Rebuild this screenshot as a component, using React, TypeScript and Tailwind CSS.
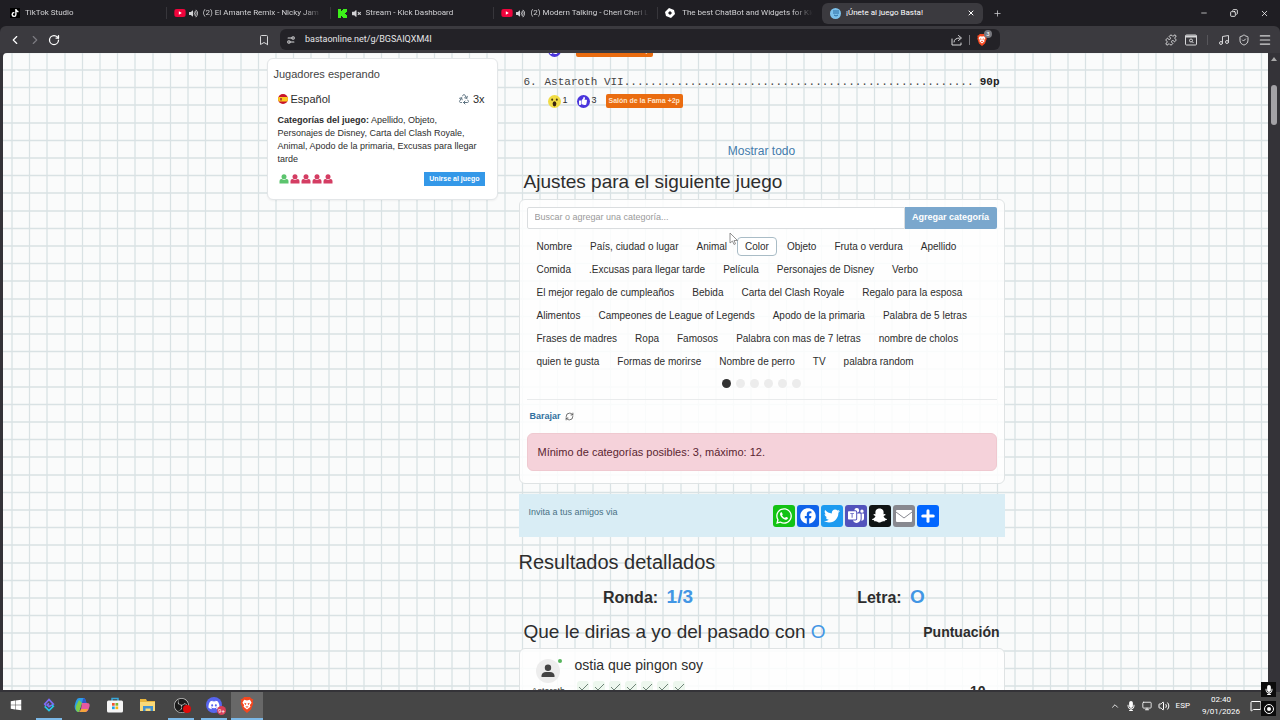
import type { ReactNode } from "react";
import {
  Bookmark,
  ChevronLeft,
  ChevronRight,
  ChevronUp,
  Copy,
  Menu,
  MessageSquare,
  Minus,
  Monitor,
  Music,
  Plus,
  Puzzle,
  Recycle,
  RefreshCw,
  RotateCw,
  Settings2,
  ShieldCheck,
  Volume2,
  X,
} from "lucide-react";
import {
  FaDiscord,
  FaFacebook,
  FaMicrophone,
  FaSnapchatGhost,
  FaThumbsUp,
  FaTiktok,
  FaTwitter,
  FaVolumeMute,
  FaVolumeUp,
  FaWhatsapp,
  FaWindows,
  FaYoutube,
} from "react-icons/fa";
import { BsMicrosoftTeams } from "react-icons/bs";
import { SiObsstudio } from "react-icons/si";

const CATEGORIES = [
  "Nombre",
  "País, ciudad o lugar",
  "Animal",
  "Color",
  "Objeto",
  "Fruta o verdura",
  "Apellido",
  "Comida",
  ".Excusas para llegar tarde",
  "Película",
  "Personajes de Disney",
  "Verbo",
  "El mejor regalo de cumpleaños",
  "Bebida",
  "Carta del Clash Royale",
  "Regalo para la esposa",
  "Alimentos",
  "Campeones de League of Legends",
  "Apodo de la primaria",
  "Palabra de 5 letras",
  "Frases de madres",
  "Ropa",
  "Famosos",
  "Palabra con mas de 7 letras",
  "nombre de cholos",
  "quien te gusta",
  "Formas de morirse",
  "Nombre de perro",
  "TV",
  "palabra random",
];

const SHARE_LINKS = [
  { name: "WhatsApp", bg: "bg-[#12c314]", icon: <FaWhatsapp className="size-[18px]" /> },
  { name: "Facebook", bg: "bg-[#0f63ea]", icon: <FaFacebook className="size-4" /> },
  { name: "Twitter", bg: "bg-[#1d9bf0]", icon: <FaTwitter className="size-4" /> },
  { name: "Teams", bg: "bg-[#5253bc]", icon: <BsMicrosoftTeams className="size-4" /> },
  { name: "Snapchat", bg: "bg-[#101414]", icon: <FaSnapchatGhost className="size-[15px]" /> },
  { name: "Email", bg: "bg-[#888990]", icon: <MailGlyph /> },
  { name: "Más", bg: "bg-[#0166ff]", icon: <Plus className="size-[18px]" strokeWidth={4} /> },
];

function MailGlyph() {
  return (
    <svg viewBox="0 0 16 12" className="h-3 w-4">
      <rect width="16" height="12" rx="1" fill="#fff" />
      <path d="M0 2l8 6 8-6" fill="none" stroke="#888990" strokeWidth="1" />
    </svg>
  );
}

function BraveLion({ className }: { className: string }) {
  return (
    <svg viewBox="0 0 24 28" className={className}>
      <path d="M7 0h10l3 3 3 1-1 4 1 3-4 11-7 6-7-6L1 11l1-3-1-4 3-1z" fill="#f4471f" />
      <path d="M12 6l5-1 3 5-3 4 1 3-6 5-6-5 1-3-3-4 3-5z" fill="#fff" />
      <path d="M7 10l4 1.500-1.500 3zM17 10l-4 1.500 1.500 3zM9 17l3-1 3 1-3 2z" fill="#f4471f" />
    </svg>
  );
}

function YoutubeIcon() {
  return (
    <span className="relative flex shrink-0">
      <span className="absolute inset-x-1 inset-y-0.5 bg-white" />
      <FaYoutube className="relative size-3 text-[#f0043c]" />
    </span>
  );
}

type TabProps = { icon: ReactNode; sound?: ReactNode; title: string; divider?: boolean };

function Tab({ icon, sound, title, divider = true }: TabProps) {
  return (
    <div className="flex h-full min-w-0 flex-1 items-center">
      <button className="flex min-w-0 flex-1 items-center gap-[3px] pl-[7px] text-left">
        {icon}
        {sound}
        <span className="min-w-0 flex-1 overflow-hidden pl-0.5 whitespace-nowrap mask-r-from-85% mask-r-to-100%">
          {title}
        </span>
      </button>
      <span className={divider ? "ml-2 h-3 w-px bg-[#37363b]" : "ml-2 w-px"} />
    </div>
  );
}

function TabStrip() {
  return (
    <div className="flex h-[26px] items-center pl-[3px] text-[8px] text-[#d2d2d5]">
      <div className="flex h-full w-[819px] shrink items-center">
        <Tab
          icon={
            <span className="flex size-[10px] shrink-0 items-center justify-center bg-black text-white">
              <FaTiktok className="size-2" />
            </span>
          }
          title="TikTok Studio"
        />
        <Tab
          icon={<YoutubeIcon />}
          sound={<FaVolumeUp className="size-[9px] shrink-0" />}
          title="(2) El Amante Remix - Nicky Jam"
        />
        <Tab
          icon={
            <svg viewBox="0 0 9 9" className="size-[9px] shrink-0" fill="#3df01a">
              <path d="M0 0h3v2h1V1h1V0h4v3H8v1H7v1h1v1h1v3H5V8H4V7H3v2H0z" />
            </svg>
          }
          sound={<FaVolumeMute className="ml-0.5 size-[9px] shrink-0" />}
          title="Stream - Kick Dashboard"
        />
        <Tab
          icon={<YoutubeIcon />}
          sound={<FaVolumeUp className="size-[9px] shrink-0" />}
          title="(2) Modern Talking - Cheri Cheri L"
        />
        <Tab
          icon={
            <svg viewBox="0 0 10 10" className="mr-0.5 size-[10px] shrink-0">
              <path d="M4 0l5 2 1 4-4 4-5-2-1-4z" fill="#fff" />
              <path d="M5 3l2 2-2 2-2-2z" fill="#1f1e23" />
            </svg>
          }
          title="The best ChatBot and Widgets for Kic"
          divider={false}
        />
      </div>
      <div className="flex h-[21px] w-[161px] items-center rounded-md bg-[#3b3a3f] px-2 text-white">
        <span className="flex size-[11px] items-center justify-center rounded-full bg-[#7cc0ea]">
          <svg viewBox="0 0 8 8" className="size-2" fill="none" stroke="#2a6fa5">
            <path d="M2 1v4M4 1v4M6 1v4M2 6q2 2 4 0" />
          </svg>
        </span>
        <span className="ml-[5px] flex-1">¡Únete al juego Basta!</span>
        <button aria-label="Cerrar pestaña">
          <X className="size-2" strokeWidth={3} />
        </button>
      </div>
      <button aria-label="Nueva pestaña" className="ml-2.5">
        <Plus className="size-[9px]" />
      </button>
      <div className="ml-auto flex items-center gap-[22px] pr-[11px] text-white">
        <button aria-label="Minimizar">
          <Minus className="size-2" />
        </button>
        <button aria-label="Restaurar">
          <Copy className="size-2 -scale-x-100" strokeWidth={2.5} />
        </button>
        <button aria-label="Cerrar">
          <X className="size-[9px]" />
        </button>
      </div>
    </div>
  );
}

function Toolbar() {
  return (
    <div className="flex h-[27px] items-center rounded-t-md bg-[#3b3a3f] text-[#d6d6d8]">
      <div className="flex flex-1 items-center gap-1.5 px-2">
        <button aria-label="Atrás">
          <ChevronLeft className="size-3.5 text-white" />
        </button>
        <button aria-label="Adelante">
          <ChevronRight className="size-3.5 text-[#7c7b80]" />
        </button>
        <button aria-label="Recargar">
          <RotateCw className="size-3 text-white" strokeWidth={2.5} />
        </button>
        <button aria-label="Marcador" className="mr-0.5 ml-auto">
          <Bookmark className="size-3" />
        </button>
      </div>
      <div className="flex h-[21px] w-[720px] items-center rounded-md bg-[#232227] px-1.5">
        <Settings2 className="size-2.5 -scale-x-100" strokeWidth={2.5} />
        <input
          aria-label="Dirección"
          defaultValue="bastaonline.net/g/BGSAIQXM4I"
          className="ml-[9px] min-w-0 flex-1 bg-transparent text-[9px] text-[#e6e6e8] outline-none"
        />
        <button aria-label="Compartir">
          <svg
            viewBox="0 0 12 12"
            className="size-3"
            fill="none"
            stroke="currentColor"
            strokeLinecap="round"
            strokeLinejoin="round"
          >
            <path d="M1 5v6h9V9M3 8q0-4 6-4M7.500 1.500L10.500 4 7.500 6.500" />
          </svg>
        </button>
        <span className="mx-1.5 h-2.5 w-px bg-[#77767b]" />
        <button aria-label="Escudo" className="relative mr-1.5">
          <BraveLion className="h-3 w-3" />
          <span className="absolute -top-1 -right-1 flex size-2 items-center justify-center rounded-full bg-[#77787e] text-[6px] text-white">
            3
          </span>
        </button>
      </div>
      <div className="flex flex-1 items-center justify-end gap-2 px-2">
        <Puzzle className="size-3" />
        <svg viewBox="0 0 12 12" className="size-3" fill="none" stroke="currentColor">
          <rect x=".5" y="1" width="11" height="10" rx="1" />
          <path d="M.5 2.500h11" strokeWidth="2" />
          <circle cx="6" cy="6.500" r="1.500" />
          <path d="M7 7.500l1.500 1.500" />
        </svg>
        <span className="mx-0.5 h-2.5 w-px bg-[#57565b]" />
        <Music className="size-3" />
        <ShieldCheck className="size-3" />
        <Menu className="size-3.5" />
      </div>
    </div>
  );
}

function GridPaper() {
  return (
    <svg className="absolute inset-0 h-full w-full" aria-hidden="true">
      <defs>
        <pattern id="paper" x="8" y="16" width="88" height="88" patternUnits="userSpaceOnUse">
          <path
            d="M0 1h88M0 18.500h88M0 36h88M0 54h88M0 71.500h88M1 0v88M18.500 0v88M36 0v88M54 0v88M71.500 0v88"
            stroke="#d9e2e4"
            strokeWidth="1.300"
          />
        </pattern>
      </defs>
      <rect width="100%" height="100%" fill="url(#paper)" />
    </svg>
  );
}

function FameBadge() {
  return (
    <span className="flex h-3.5 items-center rounded-xs bg-[#ea6c10] px-[3px] text-[7px] font-bold text-[#ffe3c8]">
      Salón de la Fama +2p
    </span>
  );
}

function LikeIcon() {
  return (
    <span className="flex size-[13px] items-center justify-center rounded-full bg-[#4a35dc] text-white">
      <FaThumbsUp className="size-2" />
    </span>
  );
}

function WaitingCard() {
  return (
    <div className="rounded-md border border-[#e3e6e8] bg-white px-1.5 pt-[7px] pb-[13px] shadow-xs">
      <h3 className="text-[11px] leading-4 text-[#444]">Jugadores esperando</h3>
      <div className="mt-[9px] px-1 pr-1.5">
        <div className="flex items-center justify-between text-[11px] leading-4">
          <span className="flex items-center gap-[3px]">
            <svg viewBox="0 0 10 10" className="size-[10px]">
              <clipPath id="flag">
                <circle cx="5" cy="5" r="5" />
              </clipPath>
              <g clipPath="url(#flag)">
                <rect width="10" height="10" fill="#c8142b" />
                <rect y="3" width="10" height="4.500" fill="#fbcb1f" />
                <rect x="2" y="4" width="2" height="2.500" fill="#b5522b" />
              </g>
            </svg>
            Español
          </span>
          <span className="flex items-center gap-[3px]">
            <Recycle className="size-3 text-[#5f7482]" />
            3x
          </span>
        </div>
        <p className="mt-[7px] text-[9px] leading-[13px]">
          <b>Categorías del juego:</b> Apellido, Objeto, Personajes de Disney, Carta del Clash Royale,
          Animal, Apodo de la primaria, Excusas para llegar tarde
        </p>
        <div className="mt-1.5 flex items-center justify-between">
          <div className="flex gap-px pl-px">
            {["#5cc46e", "#d43d63", "#d43d63", "#d43d63", "#d43d63"].map((color, i) => (
              <svg key={i} viewBox="0 0 10 10" className="size-[10px]" fill={color}>
                <circle cx="5" cy="2.700" r="2.500" />
                <path d="M.5 9.500V7q0-2 2-2L5 6l2.500-1q2 0 2 2v2.500z" />
              </svg>
            ))}
          </div>
          <button className="h-3.5 bg-[#3498e8] px-[5px] text-[7px] font-bold text-white">
            Unirse al juego
          </button>
        </div>
      </div>
    </div>
  );
}

function Ranking() {
  return (
    <div className="px-[5px]">
      <div className="flex pl-6">
        <div className="flex w-7 items-center">
          <LikeIcon />
        </div>
        <FameBadge />
      </div>
      <div className="mt-[19px] flex font-['Liberation_Mono',monospace] text-[11px] leading-[13px] text-[#444]">
        <span className="w-[21px]">6.</span>
        <span>Astaroth VII</span>
        <span className="min-w-0 flex-1 overflow-hidden whitespace-nowrap">{".".repeat(53)}</span>
        <b className="text-[#222]">90p</b>
      </div>
      <div className="mt-[5px] flex items-center pl-6 text-[9px]">
        <svg viewBox="0 0 14 14" className="size-[13px]">
          <circle cx="7" cy="7" r="7" fill="#f1dc45" />
          <circle cx="4.500" cy="5" r="1.100" fill="#4a3a12" />
          <circle cx="9.500" cy="5" r="1.100" fill="#4a3a12" />
          <ellipse cx="7" cy="9.500" rx="2" ry="2.800" fill="#3a2510" />
        </svg>
        <span className="w-4 pl-0.5">1</span>
        <LikeIcon />
        <span className="w-4 pl-0.5">3</span>
        <FameBadge />
      </div>
    </div>
  );
}

function SettingsCard() {
  return (
    <div className="mt-[5px] rounded-md border border-[#dfe3e4] bg-white/85 px-[7px] pt-[7px] pb-3">
      <div className="flex h-[22px]">
        <input
          aria-label="Buscar o agregar una categoría"
          placeholder="Buscar o agregar una categoría..."
          className="min-w-0 flex-1 rounded-l-xs border border-[#dadddf] bg-white px-[7px] text-[9px] outline-none placeholder:text-[#9a9a9a]"
        />
        <button className="w-[92px] rounded-r-xs bg-[#7aa7cd] text-[9px] font-bold text-white">
          Agregar categoría
        </button>
      </div>
      <div className="mt-2 flex flex-wrap gap-x-0.5 gap-y-1 px-0.5 text-[10px]">
        {CATEGORIES.map((name) => (
          <button
            key={name}
            className={
              name === "Color"
                ? "h-[19px] rounded-sm border border-[#a9bcc6] bg-white px-[7px]"
                : "h-[19px] rounded-sm border border-transparent px-[7px]"
            }
          >
            {name}
          </button>
        ))}
      </div>
      <div className="mt-2 flex justify-center gap-[5px]">
        <button aria-label="Página 1" className="size-[9px] rounded-full bg-[#333]" />
        {[2, 3, 4, 5, 6].map((page) => (
          <button
            key={page}
            aria-label={`Página ${page}`}
            className="size-[9px] rounded-full bg-[#ececec]"
          />
        ))}
      </div>
      <hr className="mt-[11px] border-[#e9ebec]" />
      <button className="mt-[9px] ml-[3px] flex items-center gap-1 text-[9px] leading-[14px] font-bold text-[#31709f]">
        Barajar
        <RefreshCw className="size-[9px] text-[#444]" />
      </button>
      <p className="mt-2.5 rounded-md border border-[#efc9d0] bg-[#f5d2da] px-2.5 py-2.5 text-[11px] leading-4 text-[#5a2531]">
        Mínimo de categorías posibles: 3, máximo: 12.
      </p>
    </div>
  );
}

function ShareBar() {
  return (
    <div className="mt-2.5 flex h-[43px] items-center justify-between bg-[#d9edf5] pr-[66px] pl-2.5">
      <span className="pb-1.5 text-[9px] text-[#4a7286]">Invita a tus amigos via</span>
      <div className="flex gap-0.5">
        {SHARE_LINKS.map((link) => (
          <a
            key={link.name}
            href="#"
            aria-label={link.name}
            className={`flex size-[22px] items-center justify-center rounded-[3px] text-white ${link.bg}`}
          >
            {link.icon}
          </a>
        ))}
      </div>
    </div>
  );
}

function Results() {
  return (
    <section className="mt-[13px]">
      <h2 className="text-[20px] leading-6">Resultados detallados</h2>
      <div className="mt-[11px] flex leading-6 font-bold">
        <p className="flex-1 pl-4 text-center text-[16px]">
          Ronda: <span className="ml-1 text-[19px] text-[#4296e4]">1/3</span>
        </p>
        <p className="flex-1 pl-4 text-center text-[16px]">
          Letra: <span className="ml-1 text-[19px] text-[#4296e4]">O</span>
        </p>
      </div>
      <div className="mt-2.5 flex items-center justify-between px-[5px]">
        <h3 className="text-[19px] leading-6">
          Que le dirias a yo del pasado con <span className="text-[#4296e4]">O</span>
        </h3>
        <b className="text-[14px]">Puntuación</b>
      </div>
      <div className="mt-1 flex rounded-md border border-[#dfe3e4] bg-white/85 px-3 pt-2">
        <div className="w-[43px] pt-0.5">
          <div className="relative ml-1 flex size-6 items-center justify-center rounded-full bg-[#ededed]">
            <svg viewBox="0 0 14 14" className="size-3.5" fill="#444">
              <circle cx="7" cy="3.800" r="3.200" />
              <path d="M.5 13v-1.500Q1 8 5 8h4q4 0 4.500 3.500V13z" />
            </svg>
            <span className="absolute top-0 -right-0.5 size-1 rounded-full bg-[#55b45c]" />
          </div>
          <span className="block text-[9px] leading-3 mt-0.5">Astaroth</span>
        </div>
        <div className="flex-1">
          <p className="text-[14px] leading-4">ostia que pingon soy</p>
          <div className="mt-2 flex gap-1 pl-0.5">
            {Array.from({ length: 7 }, (_, i) => (
              <svg key={i} viewBox="0 0 12 12" className="size-3">
                <rect width="12" height="12" rx="3" fill="#edf7ee" />
                <path d="M2 6l3 3 6-6" fill="none" stroke="#6f8478" />
              </svg>
            ))}
          </div>
        </div>
        <b className="pt-6 pr-1.5 text-[14px] leading-5">10</b>
      </div>
    </section>
  );
}

function TaskSlot({ children, open, active }: { children: ReactNode; open?: boolean; active?: boolean }) {
  return (
    <button
      className={
        active
          ? "flex h-full w-8 flex-col items-center bg-[#686868]"
          : "flex h-full w-8 flex-col items-center"
      }
    >
      <span className="flex flex-1 items-center">{children}</span>
      <span
        className={active ? "h-0.5 w-full bg-[#7cb9e8]" : open ? "h-0.5 w-[26px] bg-[#7cb9e8]" : "h-0.5"}
      />
    </button>
  );
}

function Taskbar() {
  return (
    <footer className="flex h-7 items-center bg-[#464646] text-white">
      <div className="flex h-full gap-px">
        <TaskSlot>
          <FaWindows className="size-3" />
        </TaskSlot>
        <TaskSlot open>
          <svg viewBox="0 0 14 16" className="h-3.5 w-3" fill="none" strokeWidth="2">
            <path d="M3.500 9L2 7l5-5.500L12 7 7 10 5 8l2-2" stroke="#7d6cf2" />
            <path d="M2 9.500l5 5 5-5-1.500-1.500" stroke="#26c6e6" />
          </svg>
        </TaskSlot>
        <TaskSlot>
          <svg viewBox="0 0 16 16" className="size-4">
            <path d="M5 1h5q1 0 1.500 2l1 3H8L5 15H4q-2 0-3-3Q0 9 2 4 3 1 5 1z" fill="#2c9de8" />
            <path d="M2 9l3-6 3 3-3 9H4q-3-1-2-6z" fill="#7ccb4b" />
            <path d="M8 6h5q4 0 2 5-1 4-4 4H5q1.500 0 2-3z" fill="#e75aa0" />
            <path d="M5 15q1.500 0 2-3h7l-1 2q-1 1-2 1z" fill="#f5a53b" />
            <path d="M10 1q1 0 1.500 2l1 3H8l1-4z" fill="#3157c9" />
          </svg>
        </TaskSlot>
        <TaskSlot>
          <svg viewBox="0 0 16 16" className="size-4">
            <path d="M5 4V1.500h6V4" fill="none" stroke="#39a9dc" strokeWidth="1.500" />
            <rect y="3.500" width="16" height="12" rx="1.500" fill="#f5f5f5" />
            <path d="M5 6h2.700v2.700H5z" fill="#ef5330" />
            <path d="M8.500 6h2.700v2.700H8.500z" fill="#7db72f" />
            <path d="M5 9.500h2.700v2.700H5z" fill="#1ea4e8" />
            <path d="M8.500 9.500h2.700v2.700H8.500z" fill="#fbb910" />
          </svg>
        </TaskSlot>
        <TaskSlot>
          <svg viewBox="0 0 16 14" className="h-3.5 w-4">
            <path d="M0 1h6l1 2h8v10H0z" fill="#e9b53c" />
            <path d="M0 4h15v9H0z" fill="#f9d978" />
            <path d="M3 8h10v5h-2.500v-2.500h-5V13H3z" fill="#4291cf" />
          </svg>
        </TaskSlot>
        <TaskSlot open>
          <span className="relative flex rounded-full bg-[#1b1b1b]">
            <SiObsstudio className="size-[15px] text-[#c9c9c9]" />
            <span className="absolute -right-0.5 bottom-0 size-2 rounded-full bg-[#e00b0b]" />
          </span>
        </TaskSlot>
        <TaskSlot open>
          <span className="relative flex size-4 items-center justify-center rounded-full bg-[#5765ee]">
            <FaDiscord className="size-3" />
            <span className="absolute -right-1 -bottom-0.5 flex size-[9px] items-center justify-center rounded-full bg-[#d6405a] text-[6px]">
              9+
            </span>
          </span>
        </TaskSlot>
        <TaskSlot active>
          <BraveLion className="h-4 w-3.5" />
        </TaskSlot>
      </div>
      <div className="ml-auto flex items-center gap-1.5 pr-[18px] text-[8px]">
        <ChevronUp className="size-2.5" />
        <FaMicrophone className="size-2.5" />
        <Monitor className="size-2.5" />
        <Volume2 className="size-3" />
        <span>ESP</span>
        <span className="mr-1 ml-1.5 text-center leading-3">
          02:40
          <br />
          9/01/2026
        </span>
        <MessageSquare className="size-3" />
      </div>
    </footer>
  );
}

export default function App() {
  return (
    <div className="relative flex h-screen flex-col overflow-hidden bg-[#1f1e23] font-[Roboto,'Open_Sans',sans-serif]">
      <TabStrip />
      <Toolbar />
      <div className="flex min-h-0 flex-1 bg-[#343338] pb-0.5 pl-[3px]">
        <main className="relative min-w-0 flex-1 overflow-hidden rounded-tl-sm bg-[#fafbfb] font-['Liberation_Sans',Arial,sans-serif] text-[#2d2d2d]">
          <GridPaper />
          <div className="relative mx-auto flex w-[738px] max-w-full items-start gap-[21px]">
            <div className="w-[231px] pt-[5px]">
              <WaitingCard />
            </div>
            <div className="-mt-2.5 min-w-0 flex-1">
              <Ranking />
              <div className="mt-[35px] text-center text-[12px] leading-4">
                <a href="#" className="text-[#447bab]">
                  Mostrar todo
                </a>
              </div>
              <h2 className="mt-[11px] px-[5px] text-[19px] leading-6">
                Ajustes para el siguiente juego
              </h2>
              <SettingsCard />
              <ShareBar />
              <Results />
            </div>
          </div>
        </main>
        <div className="flex w-3 flex-col items-center pt-1">
          <span className="border-x-3 border-b-4 border-transparent border-b-[#a9a9a9]" />
          <span className="mt-6 h-10 w-1.5 rounded-full bg-[#a3a2a6]" />
        </div>
      </div>
      <Taskbar />

      <svg viewBox="0 0 10 14" className="absolute top-[232px] left-[729px] h-3.5 w-2.5">
        <path d="M1 1v10l2.500-2L5 12.500l1.500-.7L5 8.500h3.500z" fill="#fff" stroke="#777" strokeWidth=".8" />
      </svg>
      <div className="absolute right-1 bottom-1 flex flex-col gap-1 text-white">
        <span className="flex size-[15px] items-center justify-center bg-[#0c0c0c]">
          <FaMicrophone className="size-2.5" />
        </span>
        <span className="flex size-[15px] items-center justify-center bg-[#0c0c0c]">
          <span className="flex size-2.5 items-center justify-center rounded-full border border-white">
            <span className="size-1 rounded-full bg-white" />
          </span>
        </span>
      </div>
    </div>
  );
}
